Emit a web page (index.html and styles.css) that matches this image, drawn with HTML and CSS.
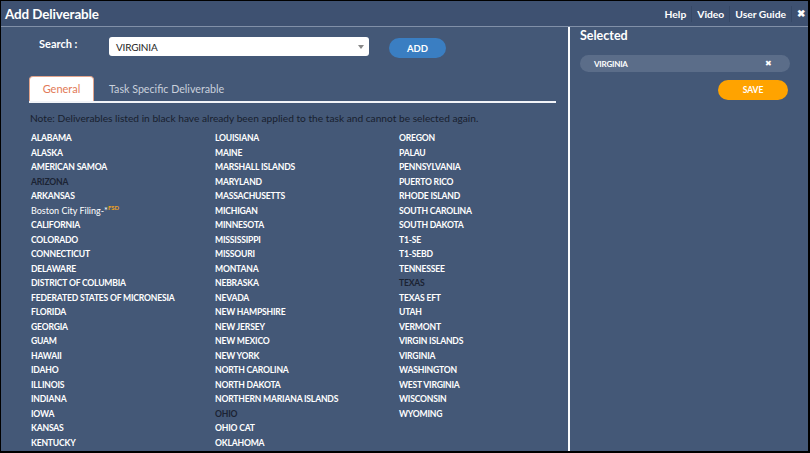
FILE: index.html
```html
<!DOCTYPE html>
<html>
<head>
<meta charset="utf-8">
<link rel="stylesheet" href="styles.css">
</head>
<body>
<div class="frame">
  <header class="topbar">
    <h1 class="title">Add Deliverable</h1>
    <nav class="links">
      <a class="link">Help</a>
      <a class="link">Video</a>
      <a class="link">User Guide</a>
      <a class="link close">&#10006;</a>
    </nav>
  </header>
  <div class="main">
    <section class="left">
      <div class="search-row">
        <label class="search-label">Search :</label>
        <div class="select">
          <span class="select-value">VIRGINIA</span>
          <span class="caret"></span>
        </div>
        <button class="btn-add">ADD</button>
      </div>
      <div class="tabs">
        <div class="tab active">General</div>
        <div class="tab">Task Specific Deliverable</div>
      </div>
      <p class="note">Note: Deliverables listed in black have already been applied to the task and cannot be selected again.</p>
      <div class="lists">
        <ul class="col">
          <li>ALABAMA</li>
          <li>ALASKA</li>
          <li>AMERICAN SAMOA</li>
          <li class="used">ARIZONA</li>
          <li>ARKANSAS</li>
          <li class="mixed">Boston City Filing-*<sup class="fsd">FSD</sup></li>
          <li>CALIFORNIA</li>
          <li>COLORADO</li>
          <li>CONNECTICUT</li>
          <li>DELAWARE</li>
          <li>DISTRICT OF COLUMBIA</li>
          <li>FEDERATED STATES OF MICRONESIA</li>
          <li>FLORIDA</li>
          <li>GEORGIA</li>
          <li>GUAM</li>
          <li>HAWAII</li>
          <li>IDAHO</li>
          <li>ILLINOIS</li>
          <li>INDIANA</li>
          <li>IOWA</li>
          <li>KANSAS</li>
          <li>KENTUCKY</li>
        </ul>
        <ul class="col">
          <li>LOUISIANA</li>
          <li>MAINE</li>
          <li>MARSHALL ISLANDS</li>
          <li>MARYLAND</li>
          <li>MASSACHUSETTS</li>
          <li>MICHIGAN</li>
          <li>MINNESOTA</li>
          <li>MISSISSIPPI</li>
          <li>MISSOURI</li>
          <li>MONTANA</li>
          <li>NEBRASKA</li>
          <li>NEVADA</li>
          <li>NEW HAMPSHIRE</li>
          <li>NEW JERSEY</li>
          <li>NEW MEXICO</li>
          <li>NEW YORK</li>
          <li>NORTH CAROLINA</li>
          <li>NORTH DAKOTA</li>
          <li>NORTHERN MARIANA ISLANDS</li>
          <li class="used">OHIO</li>
          <li>OHIO CAT</li>
          <li>OKLAHOMA</li>
        </ul>
        <ul class="col">
          <li>OREGON</li>
          <li>PALAU</li>
          <li>PENNSYLVANIA</li>
          <li>PUERTO RICO</li>
          <li>RHODE ISLAND</li>
          <li>SOUTH CAROLINA</li>
          <li>SOUTH DAKOTA</li>
          <li>T1-SE</li>
          <li>T1-SEBD</li>
          <li>TENNESSEE</li>
          <li class="used">TEXAS</li>
          <li>TEXAS EFT</li>
          <li>UTAH</li>
          <li>VERMONT</li>
          <li>VIRGIN ISLANDS</li>
          <li>VIRGINIA</li>
          <li>WASHINGTON</li>
          <li>WEST VIRGINIA</li>
          <li>WISCONSIN</li>
          <li>WYOMING</li>
        </ul>
      </div>
    </section>
    <aside class="right">
      <h2 class="selected-title">Selected</h2>
      <div class="chip">
        <span class="chip-text">VIRGINIA</span>
        <span class="chip-x">&#10006;</span>
      </div>
      <div class="save-row">
        <button class="btn-save">SAVE</button>
      </div>
    </aside>
  </div>
</div>
</body>
</html>
```
FILE: styles.css
```css
* { box-sizing: border-box; }
html, body { margin: 0; padding: 0; }
body {
  font-family: Lato, "Open Sans", sans-serif;
  background: #000;
}
.frame {
  width: 810px;
  height: 453px;
  background: #445877;
  border-top: 1px solid #000;
  border-left: 1px solid #000;
  border-right: 2px solid #000;
  border-bottom: 2px solid #000;
  display: flex;
  flex-direction: column;
  overflow: hidden;
}
.topbar {
  height: 26px;
  flex: 0 0 26px;
  background: #3e5171;
  border-bottom: 1px solid #8190a8;
  display: flex;
  align-items: center;
  justify-content: space-between;
  padding: 0 1px 0 4px;
}
.title {
  margin: 0;
  color: #fff;
  font-size: 13.4px;
  font-weight: 700;
  letter-spacing: -0.1px;
}
.links {
  display: flex;
  align-items: center;
}
.link {
  color: #fff;
  font-size: 10.3px;
  font-weight: 700;
  padding: 0 5px;
  border-left: 1px solid #364866;
  line-height: 16px;
}
.link:first-child { border-left: none; }
.link.close { font-size: 9.5px; padding-right: 2px; }
.main {
  flex: 1;
  display: flex;
  min-height: 0;
}
.left {
  width: 567px;
  flex: 0 0 567px;
  padding-top: 10px;
}
.search-row {
  display: flex;
  align-items: flex-start;
  padding-left: 38px;
}
.search-label {
  width: 70px;
  color: #fff;
  font-size: 11px;
  font-weight: 700;
  line-height: 14px;
}
.select {
  width: 260px;
  height: 19px;
  background: #fff;
  border-radius: 3px;
  display: flex;
  align-items: center;
  justify-content: space-between;
  padding: 0 5px 0 7px;
}
.select-value {
  font-size: 10px;
  color: #222;
  letter-spacing: -0.2px;
}
.caret {
  width: 0;
  height: 0;
  border-left: 3px solid transparent;
  border-right: 3px solid transparent;
  border-top: 4px solid #888;
}
.btn-add {
  margin-left: 20px;
  margin-top: 1px;
  width: 57px;
  height: 20px;
  border: none;
  border-radius: 10px;
  background: #3a7ec2;
  color: #fff;
  font-family: Lato, sans-serif;
  font-weight: 700;
  font-size: 9.5px;
  padding: 0;
}
.tabs {
  margin: 19px 0 0 28px;
  width: 527px;
  height: 26px;
  border-bottom: 2px solid #f2f4f8;
  display: flex;
  align-items: flex-end;
}
.tab {
  height: 24px;
  line-height: 24px;
  font-size: 10.7px;
  color: #c9d0dc;
  padding: 0 15px;
}
.tab.active {
  width: 65px;
  background: #fff;
  color: #e27a58;
  border: 1px solid #e2a48c;
  border-bottom: none;
  border-radius: 4px 4px 0 0;
  text-align: center;
  padding: 0;
  height: 25px;
  line-height: 24px;
  font-size: 11px;
}
.note {
  margin: 8px 0 0 29px;
  font-size: 10.2px;
  color: #18202e;
  line-height: 14px;
}
.lists {
  display: flex;
  margin: 6px 0 0 30px;
}
.col {
  list-style: none;
  margin: 0;
  padding: 0;
  width: 184px;
  flex: 0 0 184px;
}
.col li {
  color: #fff;
  font-size: 8.6px;
  font-weight: 700;
  line-height: 14.52px;
  letter-spacing: -0.2px;
  white-space: nowrap;
}
.col li.used { color: #1b2333; }
.col li.mixed {
  font-weight: 400;
  font-size: 9px;
  letter-spacing: 0;
}
.fsd {
  color: #f0a41c;
  font-size: 6px;
  font-weight: 700;
  vertical-align: 4px;
  line-height: 0;
}
.right {
  flex: 1;
  border-left: 2px solid #fbfcfd;
  padding: 0 18px 0 10px;
}
.selected-title {
  margin: 0;
  padding-top: 1px;
  color: #fff;
  font-size: 12.5px;
  font-weight: 700;
  line-height: 15px;
}
.chip {
  margin-top: 12px;
  height: 17px;
  border-radius: 9px;
  background: #5b6d89;
  display: flex;
  align-items: center;
  justify-content: space-between;
  padding: 0 18px 0 14px;
}
.chip-text {
  color: #fff;
  font-size: 8px;
  font-weight: 700;
  letter-spacing: -0.2px;
}
.chip-x {
  color: #fff;
  font-size: 7.5px;
}
.save-row {
  display: flex;
  justify-content: flex-end;
  margin-top: 8px;
  padding-right: 2px;
}
.btn-save {
  width: 70px;
  height: 20px;
  border: none;
  border-radius: 10px;
  background: #ffa300;
  color: #fff;
  font-family: Lato, sans-serif;
  font-weight: 700;
  font-size: 8.5px;
  padding: 0;
}
```
